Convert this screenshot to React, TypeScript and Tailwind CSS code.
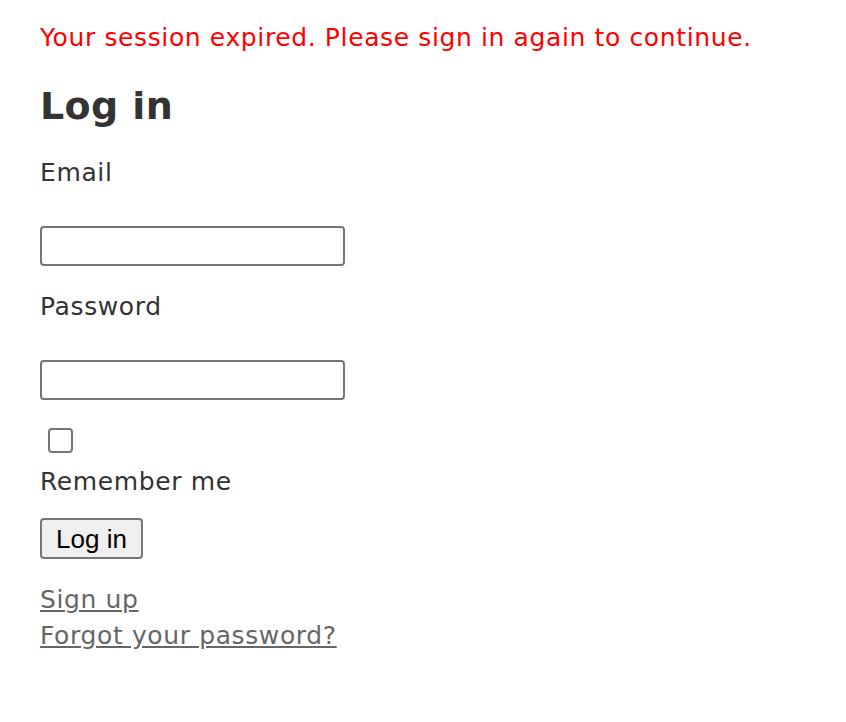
export default function App() {
  return (
    <div
      className="min-h-screen bg-white px-[40px] pt-[20px] text-[25px] leading-[36px] tracking-[0.62px] text-[#333]"
      style={{ fontFamily: '"DejaVu Sans", Verdana, sans-serif' }}
    >
      <p className="text-[#ff0000]">Your session expired. Please sign in again to continue.</p>

      <h2 className="mt-[27px] text-[38px] font-bold leading-[46px] tracking-[0.4px]">Log in</h2>

      <form className="flex flex-col items-start">
        <label htmlFor="email" className="mt-[26px]">Email</label>
        <input
          id="email"
          type="email"
          className="mt-[35px] h-[40px] w-[305px] rounded-[4px] border-2 border-[#767676] bg-white"
        />

        <label htmlFor="password" className="mt-[23px]">Password</label>
        <input
          id="password"
          type="password"
          className="mt-[35px] h-[40px] w-[305px] rounded-[4px] border-2 border-[#767676] bg-white"
        />

        <input
          id="remember"
          type="checkbox"
          className="ml-[8px] mt-[28px] h-[25px] w-[25px] appearance-none rounded-[4px] border-2 border-[#767676] bg-white"
        />
        <label htmlFor="remember" className="mt-[11px]">Remember me</label>

        <button
          type="submit"
          className="mt-[18px] h-[41px] w-[103px] rounded-[4px] border-2 border-[#767676] bg-[#efefef] text-[26px] leading-none tracking-normal text-black"
          style={{ fontFamily: '"Liberation Sans", Arial, sans-serif' }}
        >
          Log in
        </button>
      </form>

      <div className="mt-[23px] flex flex-col items-start">
        <a href="#" className="text-[#666] underline">Sign up</a>
        <a href="#" className="text-[#666] underline">Forgot your password?</a>
      </div>
    </div>
  );
}
